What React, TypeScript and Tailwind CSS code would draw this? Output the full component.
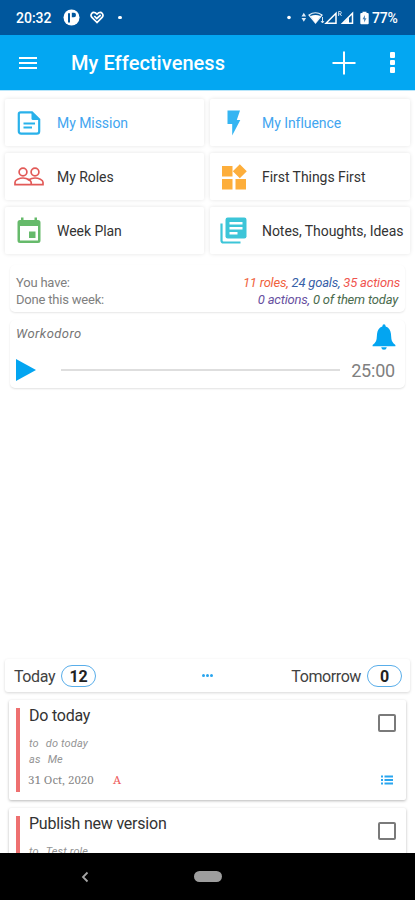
import React from 'react';

const MissionIcon = () => (
  <svg width="24" height="24" viewBox="0 0 24 24" fill="none" stroke="#29b1ea" strokeWidth="2.200">
    <path d="M3.500 1.400h11.500l7.200 7v11.800q0 2.400-2.400 2.400H4.200q-2.400 0-2.400-2.400V3.100q0-1.700 1.700-1.700z" />
    <path d="M14.500 1l8 8h-6.500q-1.500 0-1.500-1.500z" fill="#29b1ea" stroke="none" />
    <path d="M6.500 12.500h11.500M6.500 16.500h8.500" strokeWidth="2" />
  </svg>
);

const InfluenceIcon = () => (
  <svg width="14" height="26" viewBox="0 0 14 26" fill="#35b5f2">
    <path d="M.5.5h12.500L9.800 10h3.500L5.200 25.500V14H.5z" />
  </svg>
);

const RolesIcon = () => (
  <svg width="30" height="19" viewBox="0 0 30 19" fill="none" stroke="#e25a58" strokeWidth="1.700">
    <circle cx="9" cy="5" r="3.900" />
    <circle cx="21" cy="5" r="3.900" />
    <path d="M1 17.600v-2.300c0-2.500 4.500-4.300 8-4.300 2.200 0 4.500.7 6 1.700 1.500-1 3.800-1.700 6-1.700 3.500 0 8 1.800 8 4.300v2.300z" />
    <path d="M13.500 12.200c2.200.8 3.700 1.700 3.700 3.400v2" />
  </svg>
);

const FirstIcon = () => (
  <svg width="26" height="26" viewBox="0 0 26 26" fill="#fdae3b">
    <path d="M1 2h10.500v10.500H1zM1 15h10.500v10.500H1zM14.500 15H25v10.500H14.500zM18.800.2l7 7-7 7-7-7z" />
  </svg>
);

const WeekIcon = () => (
  <svg width="24" height="27" viewBox="0 0 24 27" fill="#66ba6b">
    <path d="M4 .5h2.500V3h11V.5H20V3h1q2.500 0 2.500 2.500v18Q23.500 26 21 26H3Q.5 26 .5 23.500v-18Q.5 3 3 3h1zM3 9v14.500h18V9z" fillRule="evenodd" />
    <path d="M12 14.500h6.500V21H12z" />
  </svg>
);

const NotesIcon = () => (
  <svg width="27" height="27" viewBox="0 0 27 27">
    <path d="M1.500 6.500v17q0 2 2 2h17" fill="none" stroke="#3cc5d8" strokeWidth="2.200" />
    <rect x="5.500" y=".5" width="21" height="21" rx="2.200" fill="#3cc5d8" />
    <path d="M9.500 6.300h13M9.500 11.300h13M9.500 16.300h8" stroke="#fff" strokeWidth="2.400" />
  </svg>
);

const StatusIcons = () => (
  <svg width="84" height="18" viewBox="0 0 84 18" className="shrink-0">
    <circle cx="3" cy="8.500" r="1.800" fill="#fff" />
    <path d="M17.800 3.800l2.300 3.700h-4.600zM17.800 12.700l2.300-3.700h-4.600z" fill="#dceaf6" />
    <path d="M23 6q6.500-4.500 13 0l-6.500 8z" fill="none" stroke="#e8f2fa" strokeWidth="1.200" />
    <path d="M24.500 7q5-2 10 0L29.500 14z" fill="#fff" />
    <path d="M36.500 8v6M35 12l1.500 2 1.500-2" fill="none" stroke="#dceaf6" strokeWidth="1" />
    <path d="M40 14.200l10-10v10z" fill="none" stroke="#fff" strokeWidth="1.500" />
    <path d="M52.600 7V2.500h1.700q1 0 1 1.200t-1 1.200h-1.700M54.200 5l1.300 2" fill="none" stroke="#dceaf6" strokeWidth=".9" />
    <path d="M56.500 14.200l10-10v10z" fill="none" stroke="#fff" strokeWidth="1.500" />
    <path d="M63 8.500V14h-5.500z" fill="#fff" />
    <path d="M76.500 4V2.700h4V4h1.200q1 0 1 1v9.200q0 1-1 1h-6.400q-1 0-1-1V5q0-1 1-1z" fill="#fff" />
    <path d="M78.900 6l-2.400 4.200h1.600v3.300l2.400-4.200h-1.600z" fill="#4b86b8" />
  </svg>
);

const StatusBar = () => (
  <div className="flex h-[35px] shrink-0 items-center bg-[#00579d] pl-4 pr-[15px] text-white">
    <span className="w-9 text-[14px] font-medium leading-none">20:32</span>
    <svg width="17" height="17" viewBox="0 0 17 17" className="ml-[11px]">
      <circle cx="8.500" cy="8.500" r="8" fill="#fff" />
      <path d="M6 13.500V4.200" fill="none" stroke="#00579d" strokeWidth="2" />
      <path d="M8.800 3.800h2.200q2 0 2 2.200t-2 2.200H8.800z" fill="#00579d" />
    </svg>
    <svg width="14" height="13" viewBox="0 0 14 13" className="ml-[10px]" fill="none" stroke="#fff" strokeWidth="1.700">
      <path d="M7 11.500L1.700 6.200C-.2 3.600 2.500.2 5.200 1.700L7 3.200l1.800-1.500c2.700-1.500 5.400 1.900 3.500 4.500z" />
      <path d="M4.300 5l2.500 2.500L10.700 4" />
    </svg>
    <span className="ml-[14px] size-[3.500px] rounded-full bg-white" />
    <div className="ml-auto flex items-center">
      <StatusIcons />
      <span className="ml-[2px] w-[28px] text-[14px] font-medium leading-none tracking-[-0.2px]">77%</span>
    </div>
  </div>
);

const AppBar = () => (
  <div className="flex h-[55px] shrink-0 items-center bg-[#03a7f2] pl-[19px] text-white">
    <div className="flex w-[18px] flex-col gap-[3px]">
      <div className="h-[2px] bg-white" />
      <div className="h-[2px] bg-white" />
      <div className="h-[2px] bg-white" />
    </div>
    <h1 className="ml-[34px] whitespace-nowrap text-[20px] font-medium tracking-[0.06px]">My Effectiveness</h1>
    <svg width="24" height="24" viewBox="0 0 24 24" className="ml-auto" stroke="#fff" strokeWidth="2">
      <path d="M12 .5v23M.5 12h23" />
    </svg>
    <div className="ml-[34px] mr-[20px] flex flex-col gap-[2px]">
      <div className="size-[5.500px] rounded-[1px] bg-white" />
      <div className="size-[5.500px] rounded-[1px] bg-white" />
      <div className="size-[5.500px] rounded-[1px] bg-white" />
    </div>
  </div>
);

interface TileProps {
  icon: React.ReactNode;
  label: string;
  active?: boolean;
}

const Tile: React.FC<TileProps> = ({ icon, label, active }) => (
  <div className="flex h-[47px] items-center rounded-[2px] bg-white shadow-[0_0_4px_rgba(0,0,0,0.11)]">
    <div className="ml-[7px] flex w-[33px] items-center justify-center">{icon}</div>
    <span className={`ml-[12px] mt-[2px] whitespace-nowrap text-[14px] tracking-[-0.05px] ${active ? 'text-[#42a5f0]' : 'text-[#333]'}`}>
      {label}
    </span>
  </div>
);

const Summary = () => (
  <div className="mx-[10px] mt-[11px] flex h-[47px] shrink-0 justify-between rounded-[5px] bg-white pl-[6px] pr-[5px] pt-[9px] text-[13px] leading-[17px] tracking-[-0.2px] text-[#808080] shadow-[0_1px_2px_rgba(0,0,0,0.1)]">
    <div>
      <div>You have:</div>
      <div>Done this week:</div>
    </div>
    <div className="text-right italic">
      <div>
        <span className="text-[#f0623c]">11 roles, </span>
        <span className="text-[#365fa8]">24 goals, </span>
        <span className="text-[#f0554f]">35 actions</span>
      </div>
      <div className="pr-[2px]">
        <span className="text-[#67509f]">0 actions, </span>
        <span className="text-[#4a6b4d]">0 of them today</span>
      </div>
    </div>
  </div>
);

const Workodoro = () => (
  <div className="mx-[10px] mt-[8px] h-[68px] shrink-0 rounded-[5px] bg-white pl-[6px] pr-[10px] shadow-[0_1px_2px_rgba(0,0,0,0.12)]">
    <div className="flex h-[34px] items-start justify-between">
      <span className="mt-[5px] text-[13px] italic leading-[18px] tracking-[0.45px] text-[#757575]">Workodoro</span>
      <svg width="24" height="27" viewBox="0 0 24 27" className="-mr-[1px] mt-[4px]" fill="#03a5f1">
        <path d="M12 .3q1.500 0 1.700 2.100c3.300 1 4.800 3.800 5.200 7.100l.5 5.500q.3 2.800 2 4.300l2 1.700v1.300H.6V21l2-1.700q1.700-1.500 2-4.300l.5-5.500c.4-3.300 1.900-6.100 5.200-7.100Q10.500.3 12 .3zM9.200 23.300h5.600q-.4 2.500-2.800 2.500t-2.800-2.500z" />
      </svg>
    </div>
    <div className="flex h-[32px] items-center">
      <svg width="20" height="22" viewBox="0 0 20 22" fill="#03a5f1">
        <path d="M0 0l20 11L0 22z" />
      </svg>
      <div className="ml-[25px] h-[2px] w-[279px] bg-[#dedede]" />
      <span className="ml-auto mt-[2px] text-[18px] leading-none tracking-[-0.2px] text-[#808080]">25:00</span>
    </div>
  </div>
);

const Badge: React.FC<{ count: number }> = ({ count }) => (
  <span className="flex h-[22px] w-[35px] items-center justify-center rounded-full border-[1.500px] border-[#59aeea] pt-[2px] text-[16px] font-bold leading-none text-[#222]">
    {count}
  </span>
);

const DayBar = () => (
  <div className="mx-[5px] flex h-[33px] shrink-0 items-center justify-between rounded-[3px] bg-white pl-[9px] pr-[8px] text-[16px] text-[#424242] shadow-[0_1px_3px_rgba(0,0,0,0.16)]">
    <div className="flex w-[130px] items-center gap-[6px]">
      <span className="mt-[2px] tracking-[-0.4px]">Today</span>
      <Badge count={12} />
    </div>
    <div className="flex gap-[1px]">
      <div className="size-[3px] rounded-full bg-[#29a5ef]" />
      <div className="size-[3px] rounded-full bg-[#29a5ef]" />
      <div className="size-[3px] rounded-full bg-[#29a5ef]" />
    </div>
    <div className="flex w-[131px] items-center justify-end gap-[6px]">
      <span className="mt-[2px] tracking-[-0.4px]">Tomorrow</span>
      <Badge count={0} />
    </div>
  </div>
);

interface TaskProps {
  title: string;
  goal: string;
  role: string;
  date: string;
  priority: string;
}

const Task: React.FC<TaskProps> = ({ title, goal, role, date, priority }) => (
  <div className="flex h-[100px] shrink-0 rounded-[2px] bg-white pb-[8px] pl-[7px] pr-[10px] pt-[8px] shadow-[0_1px_3px_rgba(0,0,0,0.28)]">
    <div className="w-[4px] bg-[#ee7070]" />
    <div className="ml-[9px] flex-1">
      <div className="-mt-[1px] text-[16px] leading-[18px] tracking-[-0.22px] text-[#333]">{title}</div>
      <div className="mt-[11px] flex gap-[7px] text-[11px] italic leading-[16px] tracking-[0.15px] text-[#949494]">
        <span>to</span>
        <span>{goal}</span>
      </div>
      <div className="flex gap-[7px] text-[11px] italic leading-[16px] tracking-[0.15px] text-[#949494]">
        <span>as</span>
        <span>{role}</span>
      </div>
      <div className="-ml-[1px] mt-[4px] flex font-['Noto_Serif','Liberation_Serif',serif] text-[11.500px] leading-[16px] text-[#858585]">
        <span className="w-[85px]">{date}</span>
        <span className="text-[#ee5c5c]">{priority}</span>
      </div>
    </div>
    <div className="flex flex-col items-center">
      <div className="mt-[6px] size-[18px] rounded-[2px] border-2 border-[#7a7a7a]" />
      <svg width="12" height="10" viewBox="0 0 12 10" className="mt-[43px]" stroke="#29a5ef" strokeWidth="1.800">
        <path d="M0 1.500h2M3.500 1.500H12M0 5h2M3.500 5H12M0 8.500h2M3.500 8.500H12" />
      </svg>
    </div>
  </div>
);

const NavBar = () => (
  <div className="grid h-[47px] shrink-0 grid-cols-3 items-center bg-black">
    <svg width="8" height="12" viewBox="0 0 8 12" className="ml-[81px]" fill="none" stroke="#a5a5a5" strokeWidth="1.800">
      <path d="M6.500 1.500L2 6l4.500 4.500" />
    </svg>
    <div className="ml-[56px] h-[11px] w-[28px] rounded-full bg-[#9e9e9e]" />
  </div>
);

export default function App() {
  return (
    <div className="flex h-[900px] w-[415px] flex-col overflow-hidden bg-white font-[Roboto,sans-serif]">
      <StatusBar />
      <AppBar />
      <div className="h-px shrink-0 bg-[#b9e6fa]" />
      <div className="mx-[5px] mt-[8px] grid shrink-0 grid-cols-[199px_200px] gap-x-[6px] gap-y-[7px]">
        <Tile icon={<MissionIcon />} label="My Mission" active />
        <Tile icon={<InfluenceIcon />} label="My Influence" active />
        <Tile icon={<RolesIcon />} label="My Roles" />
        <Tile icon={<FirstIcon />} label="First Things First" />
        <Tile icon={<WeekIcon />} label="Week Plan" />
        <Tile icon={<NotesIcon />} label="Notes, Thoughts, Ideas" />
      </div>
      <Summary />
      <Workodoro />
      <div className="flex-1" />
      <DayBar />
      <div className="mx-[9px] mt-[8px] flex h-[153px] shrink-0 flex-col gap-[8px]">
        <Task title="Do today" goal="do today" role="Me" date="31 Oct, 2020" priority="A" />
        <Task title="Publish new version" goal="Test role" role="Me" date="31 Oct, 2020" priority="A" />
      </div>
      <div className="z-10 shrink-0">
        <NavBar />
      </div>
    </div>
  );
}
